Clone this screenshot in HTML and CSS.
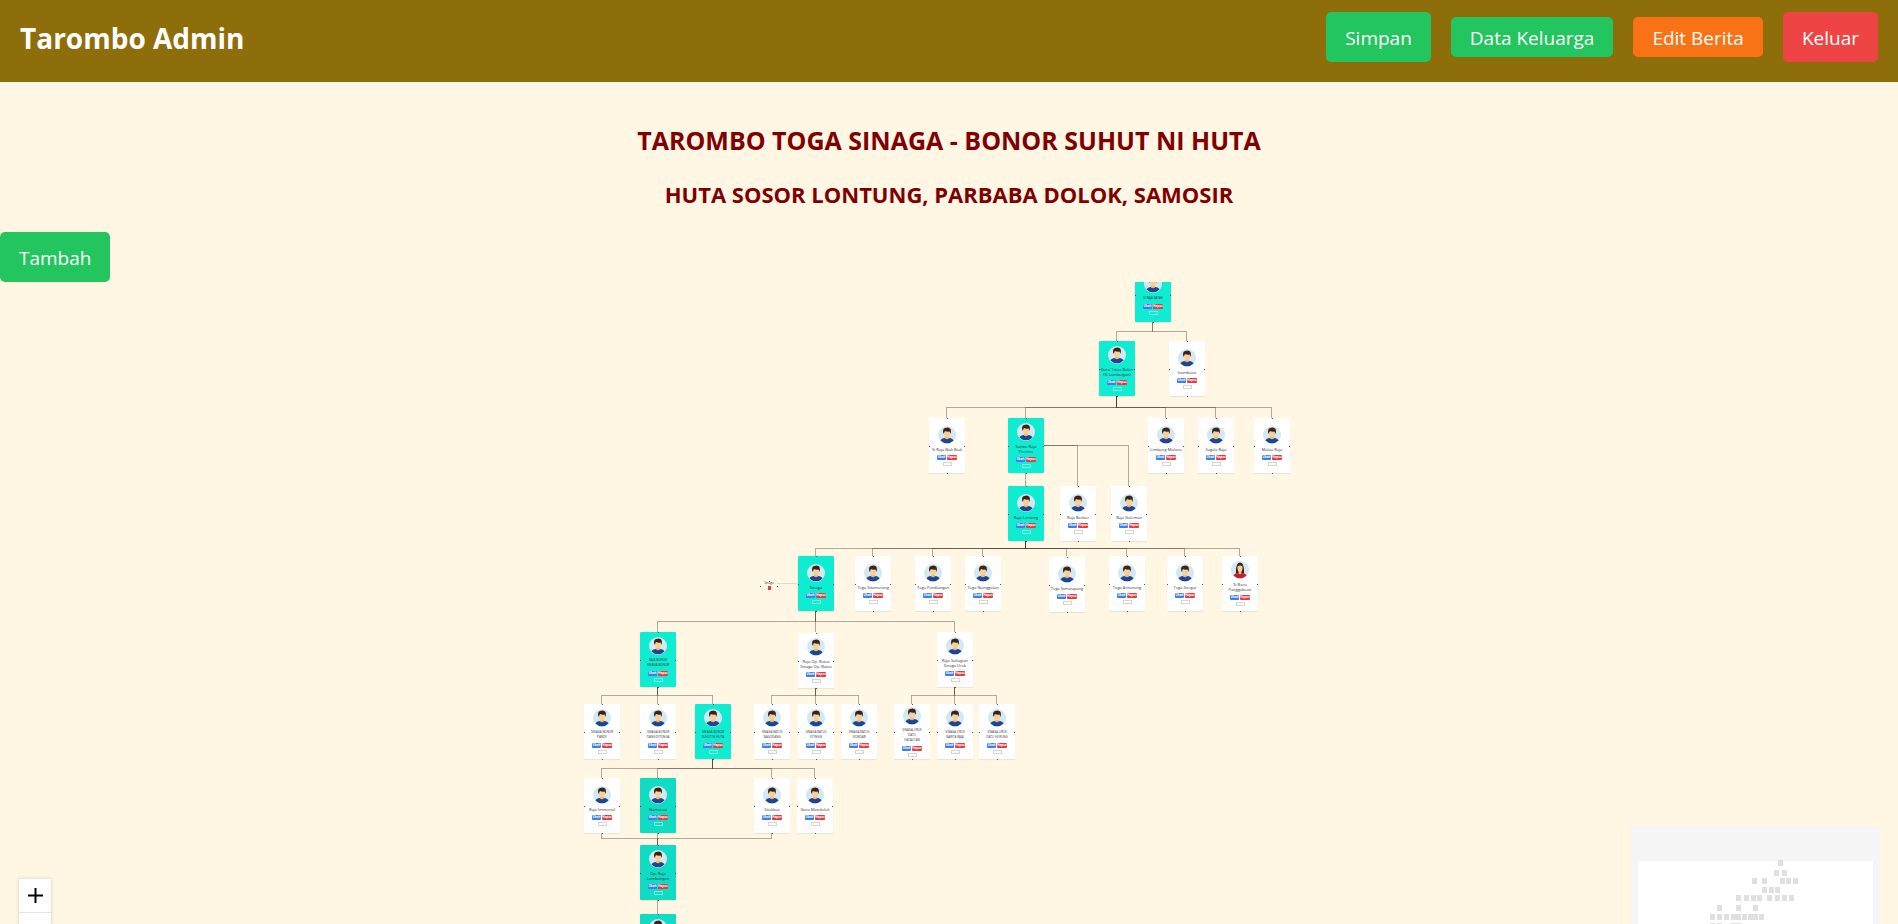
FILE: index.html
```html
<!DOCTYPE html>
<html lang="id">
<head>
<meta charset="utf-8">
<meta name="viewport" content="width=device-width, initial-scale=1">
<title>Tarombo Admin</title>
<link rel="stylesheet" href="styles.css">
</head>
<body>
<svg class="defs" aria-hidden="true">
  <symbol id="man" viewBox="0 0 36 36">
    <circle cx="18" cy="18" r="18" fill="#d3e8f1"/>
    <path d="M5 29q2-5 9-5h8q7 0 9 5a18 18 0 0 1-26 0z" fill="#1f4590"/>
    <path d="M14 19h8v6q-4 3-8 0z" fill="#eeb577"/>
    <path d="M12 11q6-4 12 0v5q-1 7-6 7t-6-7z" fill="#fbce93"/>
    <path d="M11 16q-3-10 3-12 8-3 11 2 2 4 0 10l-2-5q-5 1-9-1z" fill="#3a2419"/>
  </symbol>
  <symbol id="woman" viewBox="0 0 36 36">
    <circle cx="18" cy="18" r="18" fill="#d3e8f1"/>
    <path d="M10 25q-1-22 8-22t8 22z" fill="#3a2419"/>
    <path d="M5 29q2-5 9-5h8q7 0 9 5a18 18 0 0 1-26 0z" fill="#c4202c"/>
    <path d="M15 19h6v6q-3 3-6 0z" fill="#eeb577"/>
    <path d="M13 11q5-4 10 0v5q-1 6-5 6t-5-6z" fill="#fbce93"/>
  </symbol>
</svg>
<header class="topbar">
  <h1 class="brand">Tarombo Admin</h1>
  <nav class="actions">
    <button class="btn btn-green" type="button">Simpan</button>
    <a class="btn btn-link btn-green" href="#keluarga">Data Keluarga</a>
    <a class="btn btn-link btn-orange" href="#berita">Edit Berita</a>
    <button class="btn btn-red" type="button">Keluar</button>
  </nav>
</header>
<main>
  <div class="titles">
    <h2 class="title">TAROMBO TOGA SINAGA - BONOR SUHUT NI HUTA</h2>
    <h3 class="subtitle">HUTA SOSOR LONTUNG, PARBABA DOLOK, SAMOSIR</h3>
  </div>
  <button class="btn btn-green" type="button">Tambah</button>
  <section class="canvas" id="canvas" aria-label="Tarombo">
    <svg class="edges" id="edges" aria-hidden="true"></svg>
    <div class="controls">
      <button type="button" aria-label="Perbesar"><svg viewBox="0 0 32 32"><path d="M32 18.133H18.133V32h-4.266V18.133H0v-4.266h13.867V0h4.266v13.867H32z"/></svg></button>
      <button type="button" aria-label="Perkecil"><svg viewBox="0 0 32 5"><path d="M0 0h32v4.2H0z"/></svg></button>
      <button type="button" aria-label="Paskan"><svg viewBox="0 0 32 30"><path d="M0 0h10v4H4v6H0zM22 0h10v10h-4V4h-6zM0 20h4v6h6v4H0zM28 20h4v10H22v-4h6z"/></svg></button>
      <button type="button" aria-label="Kunci"><svg viewBox="0 0 25 32"><path d="M2 12h3V8a7 7 0 0 1 15 0v4h3v18H2zM9 12h7V8a3 3 0 0 0-7 0z"/></svg></button>
    </div>
    <svg class="minimap" id="minimap" viewBox="0 0 249 187" role="img" aria-label="Peta kecil"><rect x="7" y="35" width="235" height="152" fill="#fff"/></svg>
  </section>
</main>
<script src="tree.js"></script>
</body>
</html>
```
FILE: styles.css
```css
* { box-sizing: border-box; }
body {
  margin: 0;
  height: 100vh;
  overflow: auto;
  scrollbar-width: none;
  background: #fff7e4;
  font-family: "Open Sans", "Noto Sans", sans-serif;
  font-size: 19px;
  line-height: 30px;
}
h1, h2, h3 { margin: 0; }
.defs { display: none; }
.topbar {
  display: flex;
  justify-content: space-between;
  align-items: center;
  padding: 12px 20px 20px;
  background: #8e6d0b;
}
.brand { color: #fff; font-size: 28px; line-height: 40px; padding-top: 2px; }
.actions { display: flex; align-items: center; gap: 20px; }
.btn {
  display: inline-block;
  border: 0;
  border-radius: 5px;
  padding: 11px 19px 9px;
  color: #fff;
  font: inherit;
  text-decoration: none;
  cursor: pointer;
}
.btn-link { padding: 6px 19px 4px; }
.btn-green { background: #22c55e; }
.btn-orange { background: #f97316; }
.btn-red { background: #ef4444; }
.titles { padding: 40px 20px 22px; text-align: center; color: #800000; }
.title { font-size: 25px; line-height: 36px; margin-bottom: 20px; }
.subtitle { font-size: 22px; line-height: 32px; }
main > .btn { display: block; }
.canvas { position: relative; height: 750px; overflow: hidden; }
.edges { position: absolute; top: 0; left: -1px; width: 100%; height: 100%; }
.edges path {
  fill: none;
  stroke: #3c352c;
  stroke-opacity: .4;
  shape-rendering: crispEdges;
}
.edges .faint { stroke-opacity: .15; }

.person {
  position: absolute;
  width: 36px;
  height: 55px;
  margin-left: -18px;
  display: flex;
  flex-direction: column;
  align-items: center;
  justify-content: center;
  background: #fff;
  border-radius: 1px;
  box-shadow: 0 1px 1px rgba(0, 0, 0, .08);
  color: #333;
  font-size: 3px;
  line-height: 5px;
}
.person.main { background: #10ecd2; }
.person.deep { background: #10dcc4; }
.avatar { width: 18px; height: 18px; flex: none; }
.name { margin: 3px 0; text-align: center; white-space: nowrap; font-size: 4px; }
.name.caps { font-size: 3px; }
.row { display: flex; gap: 1px; margin-bottom: 2px; }
.person button {
  width: 9px;
  height: 5px;
  padding: 0;
  border: 0;
  border-radius: 1px;
  color: #fff;
  font: inherit;
  font-weight: 700;
  background: #3b7ff0;
}
.person .del { width: 10px; background: #e23c44; }
.person .more { height: 4px; border: 1px solid #d9d4d0; background: #fff; border-radius: 0; }
.person.main .more, .person.deep .more { border-color: #7ff0e2; background: transparent; }
.dot { position: absolute; width: 1px; height: 1px; background: #555; }
.dot.t { top: 0; left: 50%; }
.dot.b { bottom: -1px; left: 50%; }
.dot.l { left: 0; top: 50%; }
.dot.r { right: 0; top: 50%; }

.union {
  position: absolute;
  width: 18px;
  margin-left: -9px;
  display: flex;
  flex-direction: column;
  align-items: center;
  gap: 1px;
  color: #333;
  font-size: 3px;
  line-height: 4px;
}
.union button { width: 3px; height: 4px; padding: 0; border: 0; background: #e23c44; }

.controls {
  position: absolute;
  left: 19px;
  bottom: 17px;
  display: flex;
  flex-direction: column;
  box-shadow: 0 0 3px 1px rgba(0, 0, 0, .1);
}
.controls button {
  display: flex;
  align-items: center;
  justify-content: center;
  width: 32px;
  height: 34px;
  padding: 0;
  border: 0;
  border-bottom: 1px solid #e4e4e4;
  background: #fefefe;
}
.controls svg { width: 15px; height: 15px; }
.minimap {
  position: absolute;
  right: 18px;
  bottom: 19px;
  width: 249px;
  height: 187px;
  background: #f5f5f5;
}
```
FILE: tree.js
```js
// x is a card's centre, y its top, in canvas coordinates
const people = [
  [1153, -15, 'main', 'SI RAJA BATAK'],
  [1117, 59, 'main', 'Guru Tatea Bulan|(Si Lombulgan)'],
  [1187, 59, '', 'Isumbaon'],
  [947, 136, '', 'Si Raja Biak Biak'],
  [1026, 136, 'main', 'Saribu Raja|Pareme'],
  [1166, 136, '', 'Limbong Mulana'],
  [1216, 136, '', 'Sagala Raja'],
  [1272, 136, '', 'Malau Raja'],
  [1026, 204, 'main', 'Raja Lontung'],
  [1078, 204, '', 'Raja Borbor'],
  [1129, 204, '', 'Raja Galeman'],
  [816, 274, 'main', 'Sinaga'],
  [873, 274, '', 'Toga Situmorang'],
  [933, 274, '', 'Toga Pandiangan'],
  [983, 274, '', 'Toga Nainggolan'],
  [1067, 275, '', 'Toga Simatupang'],
  [1127, 274, '', 'Toga Aritonang'],
  [1185, 274, '', 'Toga Siregar'],
  [1240, 274, '', 'Si Boru|Panggabean', 'woman'],
  [658, 350, 'main', 'RAJA BONOR|SINAGA BONOR'],
  [816, 351, '', 'Raja Op. Ratus|Sinaga Op. Ratus'],
  [955, 350, '', 'Raja Suhagian|Sinaga Uruk'],
  [602, 422, '', 'SINAGA BONOR|PANDE'],
  [658, 422, '', 'SINAGA BONOR|TIANG DITONGA'],
  [713, 422, 'main', 'SINAGA BONOR|SUHUT NI HUTA'],
  [772, 422, '', 'SINAGA RATUS|NAGODANG'],
  [816, 422, '', 'SINAGA RATUS|SITINGGI'],
  [859, 422, '', 'SINAGA RATUS|SIONDAR'],
  [912, 422, '', 'SINAGA URUK|DATU|HATAUTAN'],
  [955, 422, '', 'SINAGA URUK|BARITA RAJA'],
  [997, 422, '', 'SINAGA URUK|DATU HURUNG'],
  [602, 496, '', 'Raja Immortal'],
  [658, 496, 'deep', 'Namorasi'],
  [772, 496, '', 'Sitakkus'],
  [815, 496, '', 'Guru Mandolok'],
  [658, 563, 'deep', 'Op. Raja|Lumbungan'],
  [658, 632, 'deep', '&nbsp;|&nbsp;']
];

// each group: parent x, parent bottom, elbow y, child top, child xs
const links = [
  [1153, 40, 49, 59, [1117, 1187]],
  [1117, 114, 125, 136, [947, 1026, 1166, 1216, 1272]],
  [1026, 191, 197, 204, [1026]],
  [1026, 259, 266, 274, [816, 873, 933, 983, 1067, 1127, 1185, 1240]],
  [816, 329, 339, 350, [658, 816, 955]],
  [658, 405, 413, 422, [602, 658, 713]],
  [816, 406, 413, 422, [772, 816, 859]],
  [955, 405, 413, 422, [912, 955, 997]],
  [713, 477, 486, 496, [602, 658, 772, 815]],
  [658, 563, 556, 551, [602, 658, 772]],
  [658, 618, 625, 632, [658]]
];

const canvas = document.getElementById('canvas');
const edges = document.getElementById('edges');
const svgNs = 'http://www.w3.org/2000/svg';

function edge(d, cls) {
  const p = document.createElementNS(svgNs, 'path');
  p.setAttribute('d', d);
  if (cls) p.setAttribute('class', cls);
  edges.append(p);
}
for (const [px, py, my, cy, xs] of links)
  for (const x of xs) edge(`M${px} ${py}V${my}H${x}V${cy}`);
edge('M1044 163H1078V204');
edge('M1044 163H1129V204');
edge('M778 301H798', 'faint');

const layer = document.createDocumentFragment();
for (const [x, y, kind, name, face = 'man'] of people) {
  const card = document.createElement('article');
  card.className = `person ${kind}`;
  card.style.left = `${x}px`;
  card.style.top = `${y}px`;
  const caps = name === name.toUpperCase() ? ' caps' : '';
  card.innerHTML = `<svg class="avatar"><use href="#${face}"/></svg>
    <div class="name${caps}">${name.replace(/\|/g, '<br>')}</div>
    <div class="row"><button type="button">Ubah</button><button type="button" class="del">Hapus</button></div>
    <button type="button" class="more" aria-label="Lainnya"></button>
    <i class="dot t"></i><i class="dot b"></i><i class="dot l"></i><i class="dot r"></i>`;
  layer.append(card);
}
const union = document.createElement('div');
union.className = 'union';
union.style.left = '769px';
union.style.top = '299px';
union.innerHTML = '<span>Sinaga</span><button type="button" aria-label="Hapus"></button><i class="dot t"></i><i class="dot l"></i><i class="dot r"></i>';
layer.append(union);
edges.after(layer);

const mapRows = [
  [36, [149]], [46, [145, 153]], [54, [123, 133, 151, 157, 164]],
  [63, [133, 140, 146]], [71, [107, 115, 122, 128, 138, 146, 153, 160]],
  [81, [88, 107, 124]], [90, [81, 88, 95, 102, 107, 113, 119, 124, 130]],
  [99, [81, 88, 102, 107]], [108, [88]], [117, [88]]
];
for (const [y, xs] of mapRows)
  for (const x of xs) {
    const r = document.createElementNS(svgNs, 'rect');
    r.setAttribute('x', x - 2);
    r.setAttribute('y', y - 2);
    r.setAttribute('width', 5);
    r.setAttribute('height', 6);
    r.setAttribute('fill', '#e0e0e0');
    document.getElementById('minimap').append(r);
  }
```
